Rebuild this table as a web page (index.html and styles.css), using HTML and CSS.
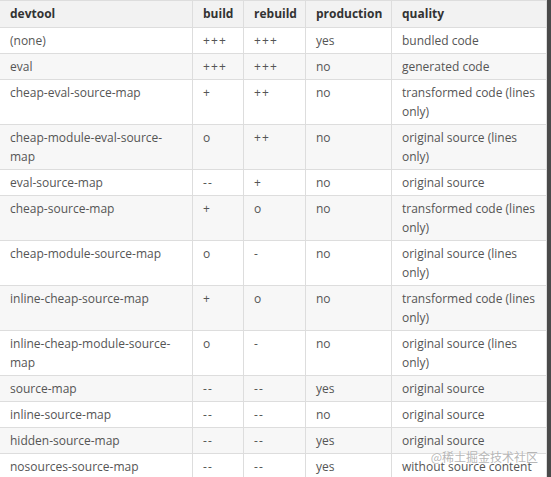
FILE: index.html
```html
<!DOCTYPE html>
<html>
<head>
<meta charset="utf-8">
<link rel="stylesheet" href="styles.css">
</head>
<body>
<div class="frame">
  <table class="devtools">
    <colgroup>
      <col class="c1"><col class="c2"><col class="c3"><col class="c4"><col class="c5">
    </colgroup>
    <thead>
      <tr><th>devtool</th><th>build</th><th>rebuild</th><th>production</th><th>quality</th></tr>
    </thead>
    <tbody>
      <tr><td>(none)</td><td class="sym">+++</td><td class="sym">+++</td><td>yes</td><td>bundled code</td></tr>
      <tr><td>eval</td><td class="sym">+++</td><td class="sym">+++</td><td>no</td><td>generated code</td></tr>
      <tr><td>cheap-eval-source-map</td><td class="sym">+</td><td class="sym">++</td><td>no</td><td>transformed code (lines only)</td></tr>
      <tr><td>cheap-module-eval-source-map</td><td class="sym">o</td><td class="sym">++</td><td>no</td><td>original source (lines only)</td></tr>
      <tr><td>eval-source-map</td><td class="sym">--</td><td class="sym">+</td><td>no</td><td>original source</td></tr>
      <tr><td>cheap-source-map</td><td class="sym">+</td><td class="sym">o</td><td>no</td><td>transformed code (lines only)</td></tr>
      <tr><td>cheap-module-source-map</td><td class="sym">o</td><td class="sym">-</td><td>no</td><td>original source (lines only)</td></tr>
      <tr><td>inline-cheap-source-map</td><td class="sym">+</td><td class="sym">o</td><td>no</td><td>transformed code (lines only)</td></tr>
      <tr><td>inline-cheap-module-source-map</td><td class="sym">o</td><td class="sym">-</td><td>no</td><td>original source (lines only)</td></tr>
      <tr><td>source-map</td><td class="sym">--</td><td class="sym">--</td><td>yes</td><td>original source</td></tr>
      <tr><td>inline-source-map</td><td class="sym">--</td><td class="sym">--</td><td>no</td><td>original source</td></tr>
      <tr><td>hidden-source-map</td><td class="sym">--</td><td class="sym">--</td><td>yes</td><td>original source</td></tr>
      <tr><td>nosources-source-map</td><td class="sym">--</td><td class="sym">--</td><td>yes</td><td>without source content</td></tr>
    </tbody>
  </table>
  <div class="watermark">@稀土掘金技术社区</div>
</div>
</body>
</html>
```
FILE: styles.css
```css
html, body {
  margin: 0;
  padding: 0;
  background: #ffffff;
}
body {
  width: 551px;
  height: 477px;
  overflow: hidden;
}
.frame {
  position: relative;
  width: 547px;
  height: 477px;
  border-right: 4px solid #4a4a4a;
  overflow: hidden;
}
.devtools {
  border-collapse: collapse;
  table-layout: fixed;
  width: 547px;
  margin-left: -1px;
  font-family: "Open Sans", "Noto Sans", sans-serif;
  font-size: 12px;
  line-height: 19px;
  color: #555555;
}
.c1 { width: 193px; }
.c2 { width: 51px; }
.c3 { width: 62px; }
.c4 { width: 86px; }
.c5 { width: 155px; }
.devtools th,
.devtools td {
  border: 1px solid #dddddd;
  padding: 3px 6px 3px 10px;
  text-align: left;
  vertical-align: top;
}
.devtools th {
  background: #f2f2f2;
  color: #333333;
  font-weight: 700;
  font-size: 12px;
  padding-top: 3px;
  padding-bottom: 4px;
}
.devtools td.sym {
  letter-spacing: 1.2px;
}
.devtools tbody tr:nth-child(2n) td {
  background: #f7f7f7;
}
.watermark {
  position: absolute;
  right: 9px;
  bottom: 13px;
  font-family: "Noto Sans CJK SC", sans-serif;
  font-size: 12px;
  line-height: 15px;
  color: rgba(150, 150, 150, 0.7);
  text-shadow: 0 0 1px #ffffff;
}
```
